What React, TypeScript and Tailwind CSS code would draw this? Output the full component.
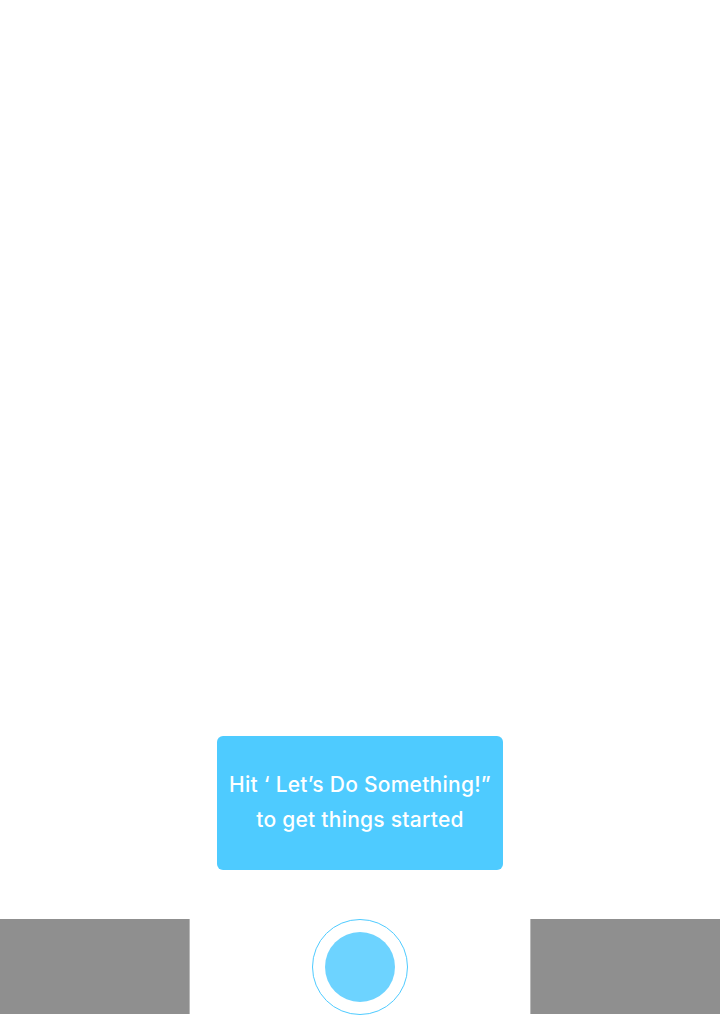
export default function App() {
  return (
    <div className="flex h-[1015px] w-[720px] flex-col bg-white" style={{ fontFamily: "Inter, 'Noto Sans', sans-serif" }}>
      <div className="flex-1" />
      <div className="flex justify-center">
        <div className="flex h-[134px] w-[286px] flex-col items-center justify-center rounded-[6px] bg-[#4ecbff] pb-[2px] text-center text-[21px] font-medium leading-[35px] tracking-[0.25px] text-white">
          <div>Hit ‘ Let’s Do Something!”</div>
          <div>to get things started</div>
        </div>
      </div>
      <div className="mt-[49px] mb-[1px] flex h-[95px] items-stretch justify-between">
        <div className="w-[190px] border-r border-[#b8b8b8] bg-[#8f8f8f]" />
        <div className="flex items-center justify-center">
          <div className="flex h-[96px] w-[96px] items-center justify-center rounded-full border-[1.5px] border-[#4ecbff] bg-white">
            <div className="h-[70px] w-[70px] rounded-full bg-[#6dd3ff]" />
          </div>
        </div>
        <div className="w-[190px] border-l border-[#b8b8b8] bg-[#8f8f8f]" />
      </div>
    </div>
  );
}
